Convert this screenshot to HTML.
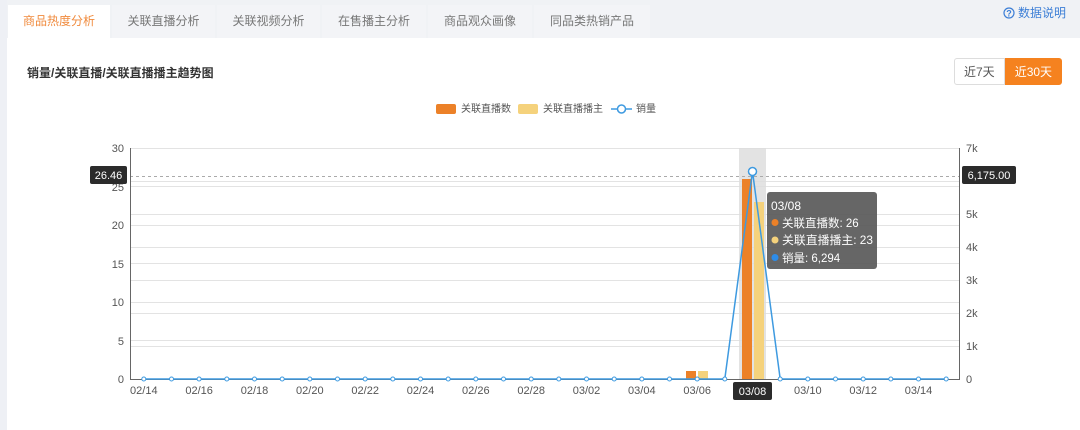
<!DOCTYPE html>
<html><head><meta charset="utf-8"><style>
body{margin:0;width:1080px;height:430px;background:#fff;font-family:"Liberation Sans","Noto Sans CJK SC",sans-serif;overflow:hidden;position:relative}
.top{position:absolute;left:0;top:0;width:1080px;height:38px;background:#f0f2f5}
.lside{position:absolute;left:0;top:0;width:7px;height:430px;background:#eef0f5}
.tab{position:absolute;top:5px;height:33px;line-height:33px;font-size:12px;color:#777;text-align:center;background:#f3f4f7}
.tab.a{background:#fff;color:#f08a3c}
.help{position:absolute;right:14px;top:4px;font-size:12px;color:#3d7fd6}
.title{position:absolute;left:27px;top:64px;font-size:12px;font-weight:bold;color:#333}
.btns{position:absolute;left:954px;top:58px;height:27px;display:flex;font-size:12px}
.btns div{line-height:27px;padding:0 9px;border:1px solid #ddd;color:#555}
.btns .on{background:#f5821f;color:#fff;border-color:#f5821f;border-radius:0 3px 3px 0}
</style></head><body>
<div class="top"></div><div class="lside"></div>
<div class="tab a" style="left:8px;width:102px">商品热度分析</div>
<div class="tab" style="left:112px;width:103px">关联直播分析</div>
<div class="tab" style="left:217px;width:103px">关联视频分析</div>
<div class="tab" style="left:322px;width:104px">在售播主分析</div>
<div class="tab" style="left:428px;width:104px">商品观众画像</div>
<div class="tab" style="left:534px;width:116px">同品类热销产品</div>
<div class="help"><svg width="12" height="12" style="vertical-align:-2px"><circle cx="6" cy="6" r="5" fill="none" stroke="#3d7fd6" stroke-width="1.2"/><text x="6" y="9.5" font-size="9" font-weight="bold" fill="#3d7fd6" text-anchor="middle" font-family="Liberation Sans">?</text></svg> 数据说明</div>
<div class="title">销量/关联直播/关联直播播主趋势图</div>
<div class="btns"><div style="border-radius:3px 0 0 3px">近7天</div><div class="on">近30天</div></div>
<svg width="1080" height="430" style="position:absolute;left:0;top:0" font-family="Liberation Sans, Noto Sans CJK SC, sans-serif">
<rect x="436" y="104" width="20" height="10" rx="2" fill="#ec8128"/><text x="461" y="112" font-size="10" fill="#555">关联直播数</text>
<rect x="518" y="104" width="20" height="10" rx="2" fill="#f5d27c"/><text x="543" y="112" font-size="10" fill="#555">关联直播播主</text>
<line x1="611" y1="109" x2="632" y2="109" stroke="#3e9ae0" stroke-width="1.5"/><circle cx="621.5" cy="109" r="4" fill="#fff" stroke="#3e9ae0" stroke-width="1.5"/><text x="636" y="112" font-size="10" fill="#555">销量</text>
<g stroke="#e3e3e3" stroke-width="1">
<line x1="130" y1="148.5" x2="960" y2="148.5"/><line x1="130" y1="186.5" x2="960" y2="186.5"/><line x1="130" y1="225.5" x2="960" y2="225.5"/><line x1="130" y1="263.5" x2="960" y2="263.5"/><line x1="130" y1="302.5" x2="960" y2="302.5"/><line x1="130" y1="340.5" x2="960" y2="340.5"/>
<line x1="130" y1="181.5" x2="960" y2="181.5"/><line x1="130" y1="214.5" x2="960" y2="214.5"/><line x1="130" y1="247.5" x2="960" y2="247.5"/><line x1="130" y1="280.5" x2="960" y2="280.5"/><line x1="130" y1="313.5" x2="960" y2="313.5"/><line x1="130" y1="346.5" x2="960" y2="346.5"/>
</g>
<rect x="739" y="148" width="27" height="231" fill="#dcdcdc" opacity="0.8"/>
<line x1="130" y1="176.5" x2="960" y2="176.5" stroke="#aaa" stroke-dasharray="3,3"/>
<g stroke="#666"><line x1="130.5" y1="148" x2="130.5" y2="379"/><line x1="959.5" y1="148" x2="959.5" y2="379"/><line x1="130" y1="379.5" x2="960" y2="379.5"/></g>
<g font-size="11" fill="#555" text-anchor="end">
<text x="124" y="152">30</text><text x="124" y="191">25</text><text x="124" y="229">20</text><text x="124" y="268">15</text><text x="124" y="306">10</text><text x="124" y="345">5</text><text x="124" y="383">0</text></g>
<g font-size="11" fill="#555">
<text x="966" y="152">7k</text><text x="966" y="218">5k</text><text x="966" y="251">4k</text><text x="966" y="284">3k</text><text x="966" y="317">2k</text><text x="966" y="350">1k</text><text x="966" y="383">0</text></g>
<rect x="686" y="371" width="10" height="8" fill="#ec8128"/><rect x="698" y="371" width="10" height="8" fill="#f5d27c"/>
<rect x="742" y="179" width="10" height="200" fill="#ec8128"/><rect x="754" y="202" width="10" height="177" fill="#f5d27c"/>
<polyline points="143.8,379 724.8,379 752.5,171.5 780.2,379 946.2,379" fill="none" stroke="#3e9ae0" stroke-width="1.5"/>
<g fill="#fff" stroke="#3e9ae0" stroke-width="1">
<circle cx="143.8" cy="379" r="2"/><circle cx="171.5" cy="379" r="2"/><circle cx="199.1" cy="379" r="2"/><circle cx="226.8" cy="379" r="2"/><circle cx="254.5" cy="379" r="2"/><circle cx="282.2" cy="379" r="2"/><circle cx="309.8" cy="379" r="2"/><circle cx="337.5" cy="379" r="2"/><circle cx="365.2" cy="379" r="2"/><circle cx="392.8" cy="379" r="2"/><circle cx="420.5" cy="379" r="2"/><circle cx="448.2" cy="379" r="2"/><circle cx="475.8" cy="379" r="2"/><circle cx="503.5" cy="379" r="2"/><circle cx="531.2" cy="379" r="2"/><circle cx="558.8" cy="379" r="2"/><circle cx="586.5" cy="379" r="2"/><circle cx="614.2" cy="379" r="2"/><circle cx="641.8" cy="379" r="2"/><circle cx="669.5" cy="379" r="2"/><circle cx="697.2" cy="379" r="2"/><circle cx="724.8" cy="379" r="2"/><circle cx="780.2" cy="379" r="2"/><circle cx="807.8" cy="379" r="2"/><circle cx="835.5" cy="379" r="2"/><circle cx="863.2" cy="379" r="2"/><circle cx="890.8" cy="379" r="2"/><circle cx="918.5" cy="379" r="2"/><circle cx="946.2" cy="379" r="2"/>
<circle cx="752.5" cy="171.5" r="4" stroke-width="1.5"/></g>
<g font-size="11" fill="#555" text-anchor="middle">
<text x="143.8" y="394">02/14</text><text x="199.1" y="394">02/16</text><text x="254.5" y="394">02/18</text><text x="309.8" y="394">02/20</text><text x="365.2" y="394">02/22</text><text x="420.5" y="394">02/24</text><text x="475.8" y="394">02/26</text><text x="531.2" y="394">02/28</text><text x="586.5" y="394">03/02</text><text x="641.8" y="394">03/04</text><text x="697.2" y="394">03/06</text><text x="807.8" y="394">03/10</text><text x="863.2" y="394">03/12</text><text x="918.5" y="394">03/14</text></g>
<rect x="733" y="382" width="39" height="18" rx="2" fill="#2b2b2b"/><text x="752.5" y="395" font-size="11" fill="#fff" text-anchor="middle">03/08</text>
<rect x="90" y="166" width="37" height="18" rx="2" fill="#2b2b2b"/><text x="108.5" y="179" font-size="11" fill="#fff" text-anchor="middle">26.46</text>
<rect x="962" y="166" width="54" height="18" rx="2" fill="#2b2b2b"/><text x="989" y="179" font-size="11" fill="#fff" text-anchor="middle">6,175.00</text>
<rect x="767" y="192" width="110" height="77" rx="3" fill="#555" opacity="0.9"/>
<text x="771" y="210" font-size="12" fill="#fff">03/08</text>
<circle cx="775" cy="222.5" r="3.5" fill="#ec8128"/><text x="782" y="227" font-size="11.5" fill="#fff">关联直播数: 26</text>
<circle cx="775" cy="240" r="3.5" fill="#f5d27c"/><text x="782" y="244" font-size="11.5" fill="#fff" textLength="91" lengthAdjust="spacingAndGlyphs">关联直播播主: 23</text>
<circle cx="775" cy="257.5" r="3.5" fill="#2d8ce8"/><text x="782" y="262" font-size="11.5" fill="#fff">销量: 6,294</text>
</svg>
</body></html>
